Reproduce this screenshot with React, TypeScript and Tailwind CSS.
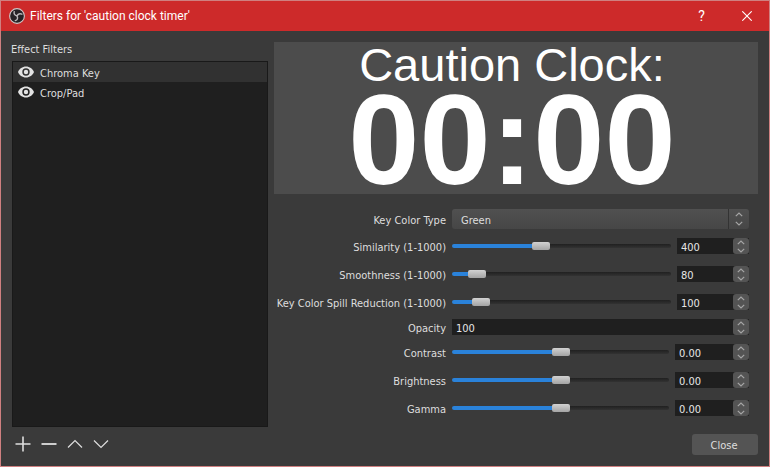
import { useState } from "react";
import type { ReactNode } from "react";

function ObsLogo() {
  return (
    <svg viewBox="0 0 16 16" className="size-4" aria-hidden="true">
      <circle cx="8" cy="8" r="7.4" fill="#262226" stroke="#d2c6c6" strokeWidth="1.1" />
      <g fill="none" stroke="#bdb8bb" strokeWidth="1.4" strokeLinecap="round">
        <path d="M5.2 3.6C4.6 5.8 5.8 7.4 7.8 7.8" />
        <path d="M12.9 6.2C10.8 5.3 8.9 6 8.3 7.8" />
        <path d="M6.3 12.6C8.4 12.2 9.1 10.2 8.2 8.5" />
      </g>
    </svg>
  );
}

function EyeIcon() {
  return (
    <svg viewBox="0 0 16 12" className="h-3 w-4" aria-hidden="true">
      <path
        fill="#e2e2e2"
        fillRule="evenodd"
        d="M8 0.5C4.3 0.5 1.4 2.8 0 6c1.4 3.2 4.3 5.5 8 5.5s6.6-2.3 8-5.5C14.6 2.8 11.7 0.5 8 0.5ZM8 9.7A3.7 3.7 0 1 1 8 2.3a3.7 3.7 0 0 1 0 7.4ZM8 8.2A2.2 2.2 0 1 0 8 3.8a2.2 2.2 0 0 0 0 4.4Z"
      />
    </svg>
  );
}

function Chevron({ down = false }: { down?: boolean }) {
  return (
    <svg viewBox="0 0 8 5" className="h-[5px] w-2" aria-hidden="true">
      <path
        d={down ? "M0.8 0.8 4 4 7.2 0.8" : "M0.8 4.2 4 1 7.2 4.2"}
        fill="none"
        stroke="#a6a6a6"
        strokeWidth="1.2"
      />
    </svg>
  );
}

type SpinProps = {
  id: string;
  value: number;
  min: number;
  max: number;
  step: number;
  decimals?: number;
  className: string;
  onChange: (value: number) => void;
};

function SpinBox({ id, value, min, max, step, decimals = 0, className, onChange }: SpinProps) {
  const set = (v: number) => onChange(Math.min(max, Math.max(min, v)));
  return (
    <div className={`flex h-4 shrink-0 bg-[#1f1f1f] ${className}`}>
      <input
        id={id}
        type="text"
        inputMode="decimal"
        aria-label={id}
        value={value.toFixed(decimals)}
        onChange={(e) => set(Number(e.target.value) || 0)}
        className="h-4 min-w-0 flex-1 bg-transparent pt-[3px] pl-1 text-[#e6e6e6] outline-none"
      />
      <div className="flex w-4 flex-col rounded-[3px] bg-[#545454]">
        <button
          type="button"
          aria-label="Increase"
          onClick={() => set(value + step)}
          className="flex flex-1 items-center justify-center"
        >
          <Chevron />
        </button>
        <button
          type="button"
          aria-label="Decrease"
          onClick={() => set(value - step)}
          className="flex flex-1 items-center justify-center"
        >
          <Chevron down />
        </button>
      </div>
    </div>
  );
}

type SliderRowProps = {
  label: string;
  initial: number;
  min: number;
  max: number;
  step?: number;
  decimals?: number;
};

function SliderRow({ label, initial, min, max, step = 1, decimals = 0 }: SliderRowProps) {
  const [value, setValue] = useState(initial);
  const percent = ((value - min) / (max - min)) * 100;
  return (
    <>
      <label htmlFor={label} className="pt-1 text-right leading-[18px] whitespace-nowrap">
        {label}
      </label>
      <div className="flex h-[22px] items-center gap-1.5">
        <input
          id={label}
          type="range"
          min={min}
          max={max}
          step={step}
          value={value}
          onChange={(e) => setValue(Number(e.target.value))}
          style={{
            backgroundImage: `linear-gradient(to right, #2a82da ${percent}%, transparent ${percent}%), linear-gradient(#202020, #323232)`,
          }}
          className="h-1 min-w-0 flex-1 appearance-none rounded-sm outline-none [&::-webkit-slider-thumb]:h-2 [&::-webkit-slider-thumb]:w-[18px] [&::-webkit-slider-thumb]:appearance-none [&::-webkit-slider-thumb]:rounded-xs [&::-webkit-slider-thumb]:bg-linear-to-b [&::-webkit-slider-thumb]:from-[#d2d2d2] [&::-webkit-slider-thumb]:to-[#a4a4a4]"
        />
        <SpinBox
          id={`${label} value`}
          value={value}
          min={min}
          max={max}
          step={step}
          decimals={decimals}
          className={decimals ? "w-[74px]" : "w-[72px]"}
          onChange={setValue}
        />
      </div>
    </>
  );
}

function ToolButton({ label, children }: { label: string; children: ReactNode }) {
  return (
    <button type="button" aria-label={label} className="size-4">
      <svg viewBox="0 0 16 16" className="size-4" fill="none" stroke="#dedede" aria-hidden="true">
        {children}
      </svg>
    </button>
  );
}

function FilterList() {
  const [selected, setSelected] = useState("Chroma Key");
  return (
    <section className="flex w-[35%] max-w-64 flex-col gap-1">
      <h2 className="-ml-px leading-[15px]">Effect Filters</h2>
      <ul className="flex-1 border border-[#191919] bg-[#1f1f1f]">
        {["Chroma Key", "Crop/Pad"].map((name) => (
          <li key={name} className={selected === name ? "bg-[#313131]" : ""}>
            <button
              type="button"
              onClick={() => setSelected(name)}
              className="flex h-5 w-full items-center gap-1.5 pl-[5px] text-left"
            >
              <EyeIcon />
              <span className="pt-1">{name}</span>
            </button>
          </li>
        ))}
      </ul>
    </section>
  );
}

function FilterProperties() {
  const [opacity, setOpacity] = useState(100);
  return (
    <form className="grid grid-cols-[172px_1fr] items-center gap-1.5 pr-[9px]">
      <label htmlFor="key-color" className="pt-1 text-right">
        Key Color Type
      </label>
      <div className="relative flex h-5">
        <select
          id="key-color"
          defaultValue="Green"
          className="h-5 w-full appearance-none rounded-[3px] bg-linear-to-b from-[#505050] to-[#464646] pt-1 pl-[9px] outline-none"
        >
          <option>Green</option>
          <option>Blue</option>
          <option>Magenta</option>
          <option>Custom Color</option>
        </select>
        <span className="pointer-events-none absolute inset-y-0 right-0 flex w-[21px] flex-col items-center justify-center gap-1 border-l border-[#333333]">
          <Chevron />
          <Chevron down />
        </span>
      </div>
      <SliderRow label="Similarity (1-1000)" initial={400} min={1} max={1000} />
      <SliderRow label="Smoothness (1-1000)" initial={80} min={1} max={1000} />
      <SliderRow label="Key Color Spill Reduction (1-1000)" initial={100} min={1} max={1000} />
      <label htmlFor="Opacity" className="pt-1 text-right leading-3">
        Opacity
      </label>
      <SpinBox
        id="Opacity"
        value={opacity}
        min={0}
        max={100}
        step={1}
        className="w-full"
        onChange={setOpacity}
      />
      <SliderRow label="Contrast" initial={0} min={-1} max={1} step={0.01} decimals={2} />
      <SliderRow label="Brightness" initial={0} min={-1} max={1} step={0.01} decimals={2} />
      <SliderRow label="Gamma" initial={0} min={-1} max={1} step={0.01} decimals={2} />
    </form>
  );
}

export default function App() {
  return (
    <div className="flex min-h-screen flex-col border border-[#cf8080] bg-[#3a3a3a] font-['DejaVu_Sans_Condensed','DejaVu_Sans',sans-serif] text-[11px] leading-4 text-[#dedede]">
      <header className="flex h-[30px] items-center bg-[#cd2a2a] pl-2 font-[Roboto,sans-serif] text-xs text-white">
        <ObsLogo />
        <h1 className="flex-1 pl-[5px]">Filters for 'caution clock timer'</h1>
        <button type="button" aria-label="Help" className="h-full w-[45px] text-sm">
          ?
        </button>
        <button
          type="button"
          aria-label="Close window"
          className="flex h-full w-[45px] items-center justify-center"
        >
          <svg viewBox="0 0 10 10" className="size-2.5" aria-hidden="true">
            <path d="M0.3 0.3 9.7 9.7M9.7 0.3 0.3 9.7" stroke="#ffffff" strokeWidth="1.1" />
          </svg>
        </button>
      </header>

      <main className="flex flex-1 gap-1.5 px-[11px] pt-[11px]">
        <FilterList />
        <section className="flex min-w-0 flex-1 flex-col gap-[15px]">
          <div className="flex h-[152px] flex-col items-center bg-[#4c4c4c] pr-2 font-['Liberation_Sans',Arial,sans-serif] whitespace-nowrap text-white">
            <p className="text-[47px] leading-[46px]">Caution Clock:</p>
            <p className="text-[128px] leading-[104px] font-bold">00:00</p>
          </div>
          <FilterProperties />
        </section>
      </main>

      <footer className="flex items-start justify-between px-[11px] pt-[7px] pb-[11px]">
        <div className="flex gap-2.5 pt-0.5 pl-[3px]">
          <ToolButton label="Add filter">
            <path d="M8 0.5v15M0.5 8h15" strokeWidth="1.6" />
          </ToolButton>
          <ToolButton label="Remove filter">
            <path d="M0.5 8h15" strokeWidth="1.8" />
          </ToolButton>
          <ToolButton label="Move up">
            <path d="M1 11.5 8 4.5l7 7" strokeWidth="1.2" />
          </ToolButton>
          <ToolButton label="Move down">
            <path d="M1 4.5l7 7 7-7" strokeWidth="1.2" />
          </ToolButton>
        </div>
        <button type="button" className="h-[21px] w-[66px] rounded-[3px] bg-[#545454] pt-[3px] pr-0.5">
          Close
        </button>
      </footer>
    </div>
  );
}
